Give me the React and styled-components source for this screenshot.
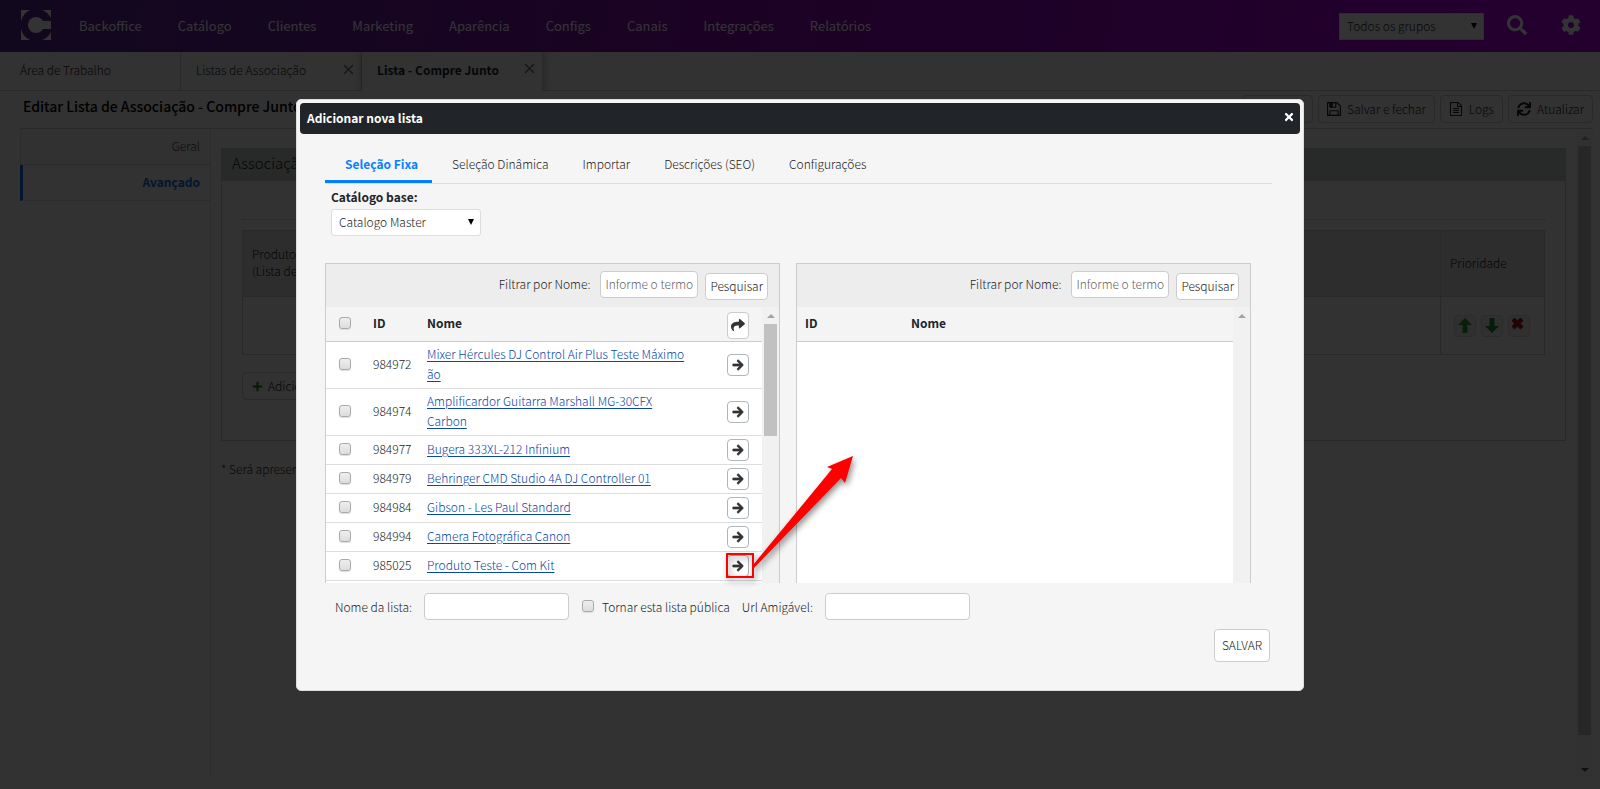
import styled, { createGlobalStyle } from "styled-components";
import {
  FaArrowRight,
  FaCog,
  FaPlus,
  FaSearch,
  FaShare,
  FaSync,
  FaTimes,
} from "react-icons/fa";

const menuItems = [
  "Backoffice",
  "Catálogo",
  "Clientes",
  "Marketing",
  "Aparência",
  "Configs",
  "Canais",
  "Integrações",
  "Relatórios",
];

const modalTabs = [
  "Seleção Fixa",
  "Seleção Dinâmica",
  "Importar",
  "Descrições (SEO)",
  "Configurações",
];

const products = [
  { id: "984972", name: "Mixer Hércules DJ Control Air Plus Teste Máximo ão" },
  { id: "984974", name: "Amplificardor Guitarra Marshall MG-30CFX Carbon" },
  { id: "984977", name: "Bugera 333XL-212 Infinium" },
  { id: "984979", name: "Behringer CMD Studio 4A DJ Controller 01" },
  { id: "984984", name: "Gibson - Les Paul Standard" },
  { id: "984994", name: "Camera Fotográfica Canon" },
  { id: "985025", name: "Produto Teste - Com Kit" },
];

const GlobalStyle = createGlobalStyle`
  * {
    box-sizing: border-box;
  }

  body {
    margin: 0;
    background: #f7f7f7;
    color: #212529;
    font-family: "Noto Sans CJK JP", "Open Sans", sans-serif;
    font-size: 12px;
    font-weight: 300;
    line-height: 20px;
  }

  button,
  input,
  select {
    font: inherit;
    color: inherit;
    margin: 0;
  }
`;

/* ---------- page ---------- */

const Page = styled.div`
  height: 100vh;
  display: flex;
  flex-direction: column;
  overflow: hidden;
`;

const TopBar = styled.header`
  height: 52px;
  flex-shrink: 0;
  display: flex;
  align-items: center;
  padding: 0 19px 0 21px;
  background: linear-gradient(100deg, #5a2a96 0%, #8c0ab8 50%, #b400e6 100%);
  color: white;
`;

const Logo = styled.svg`
  width: 30px;
  height: 30px;
  margin: 0 10px 2px 0;
`;

const Menu = styled.nav`
  flex: 1;
  display: flex;
`;

const MenuLink = styled.a`
  padding: 0 18px;
  color: white;
  font-size: 13px;
  font-weight: 400;
  text-decoration: none;
`;

const SelectBox = styled.div`
  position: relative;
  display: inline-block;
  width: ${(props) => props.$width};

  &::after {
    content: "";
    position: absolute;
    right: 7px;
    top: 10px;
    border: 3px solid transparent;
    border-top: 6px solid #000;
    border-bottom: 0;
    pointer-events: none;
  }
`;

const Select = styled.select`
  appearance: none;
  width: 100%;
  height: 27px;
  padding: 0 7px;
  background: white;
  border: 1px solid #ddd;
  border-radius: ${(props) => (props.$square ? "0" : "3px")};
  color: #222;
`;

const IconButton = styled.button`
  display: flex;
  padding: 0 0 2px;
  border: 0;
  background: none;
  color: white;
  font-size: 20px;
  margin-left: ${(props) => props.$gap};
`;

const TabBar = styled.div`
  height: 39px;
  flex-shrink: 0;
  display: flex;
  border-bottom: 1px solid #ccc;
`;

const PageTab = styled.div`
  width: 181px;
  display: flex;
  align-items: center;
  justify-content: space-between;
  padding: 0 7px ${(props) => (props.$active ? "4px" : "2px")} 15px;
  border-right: 1px solid #ccc;
  font-weight: ${(props) => (props.$active ? 700 : 300)};
  background: #f7f7f7;
  margin-bottom: ${(props) => (props.$active ? "-1px" : "0")};
  box-shadow: ${(props) => (props.$active ? "0 0 8px #aaa" : "none")};
  clip-path: inset(0 -8px 0 -8px);

  &:first-child {
    padding-left: 20px;
  }
`;

const TabClose = styled.button`
  padding: 0 0 2px;
  border: 0;
  background: none;
  display: flex;

  svg {
    width: 11px;
    height: 11px;
    stroke: #777;
  }
`;

const TitleBar = styled.div`
  height: 38px;
  flex-shrink: 0;
  display: flex;
  justify-content: space-between;
  margin: 0 7px 0 20px;
  padding: 4px 0 0 3px;
  border-bottom: 1px solid #ccc;

  h1 {
    margin: 0;
    padding-top: 1px;
    font-size: 14px;
    font-weight: 500;
    color: #000;
  }
`;

const Tools = styled.div`
  display: flex;
  gap: 5px;
`;

const ToolButton = styled.button`
  height: 28px;
  display: flex;
  align-items: center;
  gap: 6px;
  padding: 0 8px;
  background: #f7f7f7;
  border: 1px solid #ccc;
  border-radius: 4px;
  white-space: nowrap;
  color: #222;

  svg {
    width: 14px;
    height: 14px;
  }
`;

const Body = styled.div`
  flex: 1;
  min-height: 0;
  display: flex;
  margin: 0 7px 13px 20px;
`;

const SideMenu = styled.nav`
  width: 191px;
  flex-shrink: 0;
  border-right: 1px solid #ddd;
`;

const SideLink = styled.a`
  display: block;
  height: 36px;
  padding: 7px 10px 0 0;
  text-align: right;
  text-decoration: none;
  border-bottom: 1px solid #ddd;
  border-left: ${(props) => (props.$active ? "3px solid #0a6fe8" : "1px solid #ddd")};
  color: ${(props) => (props.$active ? "#0a6fe8" : "#444")};
  background: ${(props) => (props.$active ? "#f9f9f9" : "#f2f2f2")};
  font-weight: ${(props) => (props.$active ? 700 : 300)};
`;

const Content = styled.main`
  flex: 1;
  padding: 19px 10px 0;
`;

const Card = styled.section`
  height: 293px;
  border: 1px solid #c8c8c8;

  h2 {
    height: 32px;
    margin: 0;
    padding: 2px 10px 0;
    background: #c6cace;
    font-size: 15px;
    font-weight: 300;
    line-height: 24px;
  }
`;

const CardBody = styled.div`
  margin: 38px 20px 0;
  padding-top: 10px;
  border-top: 1px dotted #bbb;
`;

const PriorityTable = styled.table`
  width: 100%;
  border-collapse: collapse;
  line-height: 17px;

  th,
  td {
    border: 1px solid #ccc;
    padding: 0 9px 3px;
    text-align: left;
    font-weight: 300;
    color: #111;
  }

  th {
    height: 66px;
    background: #e2e2e2;
  }

  td {
    height: 58px;
    padding-bottom: 0;
  }

  th:last-child {
    width: 104px;
  }
`;

const PriorityButtons = styled.div`
  display: flex;
  gap: 5px;
  padding-left: 4px;

  button {
    width: 22px;
    height: 22px;
    padding: 0;
    border: 1px solid #d8d8d8;
    border-radius: 4px;
    background: #f0f0f0;
    display: flex;
    align-items: center;
    justify-content: center;
  }

  svg {
    width: 14px;
    height: 15px;
  }
`;

const AddButton = styled(ToolButton)`
  margin-top: 17px;
  padding: 0 9px;
  gap: 5px;

  svg {
    width: 11px;
    height: 11px;
    color: #2b7a1f;
  }
`;

const FootNote = styled.p`
  margin: 18px 0 0;
`;

/* ---------- scrollbar ---------- */

const Track = styled.div`
  width: 17px;
  flex-shrink: 0;
  display: flex;
  flex-direction: column;
  align-items: center;
  padding-top: 7px;
  background: ${(props) => props.$track || "#f1f1f1"};
`;

const Caret = styled.span`
  border: 4px solid transparent;
  border-top-width: ${(props) => (props.$down ? "4px" : "0")};
  border-bottom-width: ${(props) => (props.$down ? "0" : "4px")};
  border-top-color: ${(props) => (props.$down ? "#505050" : "transparent")};
  border-bottom-color: ${(props) => (props.$down ? "transparent" : "#a3a3a3")};
  margin-bottom: ${(props) => (props.$down ? "4px" : "0")};
`;

const Thumb = styled.div`
  width: 13px;
  height: ${(props) => props.$height};
  margin: 6px 0 auto;
  background: #c1c1c1;
`;

/* ---------- modal ---------- */

const Overlay = styled.div`
  position: fixed;
  inset: 0;
  display: flex;
  align-items: center;
  justify-content: center;
  background: rgba(0, 0, 0, 0.8);
`;

const Modal = styled.section`
  width: 63%;
  min-width: 960px;
  padding: 3px 3px 28px;
  background: #f5f5f5;
  border: 1px solid #ddd;
  border-radius: 5px;
`;

const ModalHeader = styled.header`
  height: 31px;
  display: flex;
  align-items: flex-start;
  justify-content: space-between;
  padding: 4px 5px 0 7px;
  background: #212529;
  border-radius: 4px;
  color: white;

  h2 {
    margin: 0;
    font-size: 12px;
    font-weight: 700;
    line-height: 22px;
  }

  button {
    display: flex;
    padding: 4px 0;
    border: 0;
    background: none;
    color: white;
    font-size: 12px;
  }
`;

const ModalBody = styled.div`
  padding: 14px 28px 0 25px;
`;

const Tabs = styled.div`
  height: 36px;
  display: flex;
  border-bottom: 1px solid #ddd;
`;

const Tab = styled.button`
  padding: 1px 14px 0 20px;
  border: 0;
  border-bottom: 3px solid ${(props) => (props.$active ? "#0080ff" : "transparent")};
  background: none;
  color: ${(props) => (props.$active ? "#0a80ff" : "#222")};
  font-weight: ${(props) => (props.$active ? 700 : 300)};
`;

const CatalogField = styled.div`
  display: flex;
  flex-direction: column;
  align-items: flex-start;
  gap: 2px;
  padding: 3px 6px 27px;

  label {
    font-weight: 700;
  }
`;

const Lists = styled.div`
  position: relative;
  display: grid;
  grid-template-columns: 1fr 1fr;
  gap: 16px;
  margin-right: 21px;
`;

const ListPanel = styled.div`
  height: 320px;
  display: flex;
  flex-direction: column;
  border: 1px solid #ccc;
  border-bottom: 0;
  overflow: hidden;
`;

const FilterBar = styled.div`
  height: 43px;
  flex-shrink: 0;
  display: flex;
  align-items: center;
  justify-content: flex-end;
  padding: 0 11px 2px;
  background: #ededed;

  label {
    margin-right: 10px;
  }
`;

const TextField = styled.input`
  width: ${(props) => props.$width};
  height: 27px;
  padding: 0 4px 2px;
  background: white;
  border: 1px solid #ccc;
  border-radius: 4px;

  &::placeholder {
    color: #666;
    opacity: 1;
  }
`;

const Button = styled.button`
  height: ${(props) => (props.$large ? "33px" : "27px")};
  padding: 0 ${(props) => (props.$large ? "7px" : "4px")};
  background: white;
  border: 1px solid #ccc;
  border-radius: 4px;
  color: #222;
`;

const FilterButton = styled(Button)`
  margin: 4px 0 0 7px;
`;

const ListArea = styled.div`
  flex: 1;
  min-height: 0;
  display: flex;
  background: white;
`;

const ListTable = styled.table`
  width: 100%;
  border-collapse: collapse;
  table-layout: fixed;
  color: #222;

  th {
    height: 35px;
    padding: 0 0 2px;
    border-bottom: 1px solid #ccc;
    background: #f4f4f4;
    color: #212529;
    font-weight: 700;
    text-align: left;
  }

  td {
    padding: 2px 0 4px;
    border-bottom: 1px solid #ddd;
  }

  th.action {
    padding: 3px 0 0;
  }

  td.action {
    padding: 3px 0;
  }

  a {
    color: #0a47a9;
    text-underline-offset: 2px;
  }
`;

const TableWrap = styled.div`
  flex: 1;
  overflow: hidden;
`;

const CheckCol = styled.col`
  width: 47px;
`;

const IdCol = styled.col`
  width: ${(props) => props.$width};
`;

const ActionCol = styled.col`
  width: 35px;
`;

const IndentTh = styled.th`
  && {
    padding-left: 8px;
  }
`;

const NameCell = styled.td`
  && {
    padding-right: 40px;
  }
`;

const Check = styled.input`
  appearance: none;
  display: block;
  width: 12px;
  height: 12px;
  margin-left: 13px;
  border: 1px solid #aaa;
  border-radius: 3px;
  background: linear-gradient(#eee, #ddd);
  box-shadow: 0 1px 1px #ddd;

  &:checked {
    background: #0080ff;
  }
`;

const MoveButton = styled.button`
  display: flex;
  align-items: center;
  justify-content: center;
  width: 22px;
  height: ${(props) => (props.$tall ? "27px" : "22px")};
  padding: 0;
  background: white;
  border: 1px solid ${(props) => (props.$tall ? "#ccc" : "#adb5bd")};
  border-radius: 4px;
  font-size: ${(props) => (props.$tall ? "14px" : "12px")};
  color: #333;

  svg {
    overflow: visible;
    stroke: currentColor;
    stroke-width: ${(props) => (props.$tall ? "0" : "36px")};
  }
`;

const Callout = styled.svg`
  position: absolute;
  left: 396px;
  top: 184px;
  width: 144px;
  height: 148px;
  pointer-events: none;
  overflow: visible;
  filter: drop-shadow(2px 3px 3px rgba(0, 0, 0, 0.45));
`;

const ListForm = styled.form`
  padding: 10px 2px 0 10px;
`;

const FormRow = styled.div`
  display: flex;
  align-items: center;

  label {
    margin-right: 12px;
    padding-top: 1px;
  }

  ${Check} {
    margin: 0 8px 0 13px;
  }
`;

const FormActions = styled.div`
  display: flex;
  justify-content: flex-end;
  margin-top: 9px;
`;

function SaveIcon() {
  return (
    <svg viewBox="0 0 1536 1536" fill="currentColor" aria-hidden="true">
      <path d="M384 1408h768v-384h-768v384zm896 0h128v-896q0-14-10-38.5t-20-34.5l-281-281q-10-10-34-20t-39-10v416q0 40-28 68t-68 28h-576q-40 0-68-28t-28-68v-416h-128v1280h128v-416q0-40 28-68t68-28h832q40 0 68 28t28 68v416zm-384-928v-320q0-13-9.5-22.5t-22.5-9.5h-192q-13 0-22.5 9.5t-9.5 22.5v320q0 13 9.5 22.5t22.5 9.5h192q13 0 22.5-9.5t9.5-22.5zm640 32v928q0 40-28 68t-68 28h-1344q-40 0-68-28t-28-68v-1344q0-40 28-68t68-28h928q40 0 88 20t76 48l280 280q28 28 48 76t20 88z" />
    </svg>
  );
}

function FileIcon() {
  return (
    <svg viewBox="0 0 1536 1792" fill="currentColor" aria-hidden="true">
      <path d="M1468 380q28 28 48 76t20 88v1152q0 40-28 68t-68 28h-1344q-40 0-68-28t-28-68v-1600q0-40 28-68t68-28h896q40 0 88 20t76 48zm-444-244v376h376q-10-29-22-41l-313-313q-12-12-41-22zm384 1528v-1024h-416q-40 0-68-28t-28-68v-416h-768v1536h1280zm-1024-864q0-14 9-23t23-9h704q14 0 23 9t9 23v64q0 14-9 23t-23 9h-704q-14 0-23-9t-9-23v-64zm736 224q14 0 23 9t9 23v64q0 14-9 23t-23 9h-704q-14 0-23-9t-9-23v-64q0-14 9-23t23-9h704zm0 256q14 0 23 9t9 23v64q0 14-9 23t-23 9h-704q-14 0-23-9t-9-23v-64q0-14 9-23t23-9h704z" />
    </svg>
  );
}

function CloseIcon() {
  return (
    <svg viewBox="0 0 11 11" fill="none" strokeWidth="1.5" aria-hidden="true">
      <path d="M1 1l9 9M10 1l-9 9" />
    </svg>
  );
}

function LogoMark() {
  return (
    <Logo viewBox="0 0 30 30" fill="white" aria-hidden="true">
      <path d="M0 0h9A17 17 0 0 0 0 11zM21 0h9v8A17 17 0 0 0 21 0zM0 19A17 17 0 0 0 9 30H0zM30 22v8h-9A17 17 0 0 0 30 22z" />
      <circle cx="15" cy="15" r="8" />
      <rect x="16" y="11" width="14" height="8" />
    </Logo>
  );
}

function PriorityActions() {
  return (
    <PriorityButtons>
      <button aria-label="Subir">
        <svg viewBox="0 0 14 15">
          <path d="M7 0l7 7h-4.500v8h-5V7H0z" fill="#2f9a35" />
        </svg>
      </button>
      <button aria-label="Descer">
        <svg viewBox="0 0 14 15">
          <path d="M7 15l7-7h-4.500V0h-5v8H0z" fill="#1d8d2a" />
        </svg>
      </button>
      <button aria-label="Remover">
        <svg viewBox="0 0 14 15">
          <path d="M1 1l9 9M10 1l-9 9" stroke="#b01414" strokeWidth="4.500" />
        </svg>
      </button>
    </PriorityButtons>
  );
}

function Filter({ id }) {
  return (
    <FilterBar>
      <label htmlFor={id}>Filtrar por Nome:</label>
      <TextField id={id} $width="98px" placeholder="Informe o termo" />
      <FilterButton>Pesquisar</FilterButton>
    </FilterBar>
  );
}

function AvailableList() {
  return (
    <ListPanel>
      <Filter id="filter-available" />
      <ListArea>
        <TableWrap>
          <ListTable>
            <colgroup>
              <CheckCol />
              <IdCol $width="54px" />
              <col />
              <ActionCol />
            </colgroup>
            <thead>
              <tr>
                <th>
                  <Check type="checkbox" aria-label="Selecionar todos" />
                </th>
                <th>ID</th>
                <th>Nome</th>
                <th className="action">
                  <MoveButton $tall aria-label="Mover selecionados">
                    <FaShare />
                  </MoveButton>
                </th>
              </tr>
            </thead>
            <tbody>
              {products.map((product) => (
                <tr key={product.id}>
                  <td>
                    <Check type="checkbox" aria-label={product.name} />
                  </td>
                  <td>{product.id}</td>
                  <NameCell>
                    <a href="#produto">{product.name}</a>
                  </NameCell>
                  <td className="action">
                    <MoveButton aria-label={`Mover ${product.name}`}>
                      <FaArrowRight />
                    </MoveButton>
                  </td>
                </tr>
              ))}
            </tbody>
          </ListTable>
        </TableWrap>
        <Track>
          <Caret />
          <Thumb $height="112px" />
        </Track>
      </ListArea>
    </ListPanel>
  );
}

function SelectedList() {
  return (
    <ListPanel>
      <Filter id="filter-selected" />
      <ListArea>
        <TableWrap>
          <ListTable>
            <colgroup>
              <IdCol $width="114px" />
              <col />
            </colgroup>
            <thead>
              <tr>
                <IndentTh>ID</IndentTh>
                <th>Nome</th>
              </tr>
            </thead>
          </ListTable>
        </TableWrap>
        <Track>
          <Caret />
        </Track>
      </ListArea>
    </ListPanel>
  );
}

function AddListModal() {
  return (
    <Overlay>
      <Modal role="dialog" aria-labelledby="modal-title">
        <ModalHeader>
          <h2 id="modal-title">Adicionar nova lista</h2>
          <button aria-label="Fechar">
            <FaTimes />
          </button>
        </ModalHeader>
        <ModalBody>
          <Tabs>
            {modalTabs.map((tab, index) => (
              <Tab key={tab} $active={index === 0}>
                {tab}
              </Tab>
            ))}
          </Tabs>

          <CatalogField>
            <label htmlFor="catalog">Catálogo base:</label>
            <SelectBox $width="150px">
              <Select id="catalog">
                <option>Catalogo Master</option>
              </Select>
            </SelectBox>
          </CatalogField>

          <Lists>
            <AvailableList />
            <SelectedList />
            <Callout viewBox="0 0 144 148" aria-hidden="true">
              <rect x="6" y="107" width="26" height="23" fill="none" stroke="#f00" strokeWidth="2" />
              <path d="M32 118L111 22L106 20L132 9L124 36L120 31L33 121z" fill="#f00" />
            </Callout>
          </Lists>

          <ListForm>
            <FormRow>
              <label htmlFor="list-name">Nome da lista:</label>
              <TextField id="list-name" $width="145px" />
              <Check type="checkbox" id="list-public" />
              <label htmlFor="list-public">Tornar esta lista pública</label>
              <label htmlFor="list-url">Url Amigável:</label>
              <TextField id="list-url" $width="145px" />
            </FormRow>
            <FormActions>
              <Button type="button" $large>
                SALVAR
              </Button>
            </FormActions>
          </ListForm>
        </ModalBody>
      </Modal>
    </Overlay>
  );
}

export default function App() {
  return (
    <>
      <GlobalStyle />
      <Page>
        <TopBar>
          <LogoMark />
          <Menu>
            {menuItems.map((item) => (
              <MenuLink key={item} href="#menu">
                {item}
              </MenuLink>
            ))}
          </Menu>
          <SelectBox $width="145px">
            <Select $square aria-label="Grupos">
              <option>Todos os grupos</option>
            </Select>
          </SelectBox>
          <IconButton $gap="23px" aria-label="Buscar">
            <FaSearch />
          </IconButton>
          <IconButton $gap="34px" aria-label="Configurações">
            <FaCog />
          </IconButton>
        </TopBar>

        <TabBar>
          <PageTab>Área de Trabalho</PageTab>
          <PageTab>
            Listas de Associação
            <TabClose aria-label="Fechar aba">
              <CloseIcon />
            </TabClose>
          </PageTab>
          <PageTab $active>
            Lista - Compre Junto
            <TabClose aria-label="Fechar aba">
              <CloseIcon />
            </TabClose>
          </PageTab>
        </TabBar>

        <TitleBar>
          <h1>Editar Lista de Associação - Compre Junto</h1>
          <Tools>
            <ToolButton>
              <SaveIcon />
              Salvar
            </ToolButton>
            <ToolButton>
              <SaveIcon />
              Salvar e fechar
            </ToolButton>
            <ToolButton>
              <FileIcon />
              Logs
            </ToolButton>
            <ToolButton>
              <FaSync />
              Atualizar
            </ToolButton>
          </Tools>
        </TitleBar>

        <Body>
          <SideMenu>
            <SideLink href="#geral">Geral</SideLink>
            <SideLink href="#avancado" $active>
              Avançado
            </SideLink>
          </SideMenu>
          <Content>
            <Card>
              <h2>Associação</h2>
              <CardBody>
                <PriorityTable>
                  <thead>
                    <tr>
                      <th>
                        Produto
                        <br />
                        (Lista de)
                      </th>
                      <th>Prioridade</th>
                    </tr>
                  </thead>
                  <tbody>
                    <tr>
                      <td />
                      <td>
                        <PriorityActions />
                      </td>
                    </tr>
                  </tbody>
                </PriorityTable>
                <AddButton>
                  <FaPlus />
                  Adicionar
                </AddButton>
              </CardBody>
            </Card>
            <FootNote>* Será apresentado</FootNote>
          </Content>
          <Track $track="#f4f4f4">
            <Caret />
            <Thumb $height="589px" />
            <Caret $down />
          </Track>
        </Body>
      </Page>
      <AddListModal />
    </>
  );
}
